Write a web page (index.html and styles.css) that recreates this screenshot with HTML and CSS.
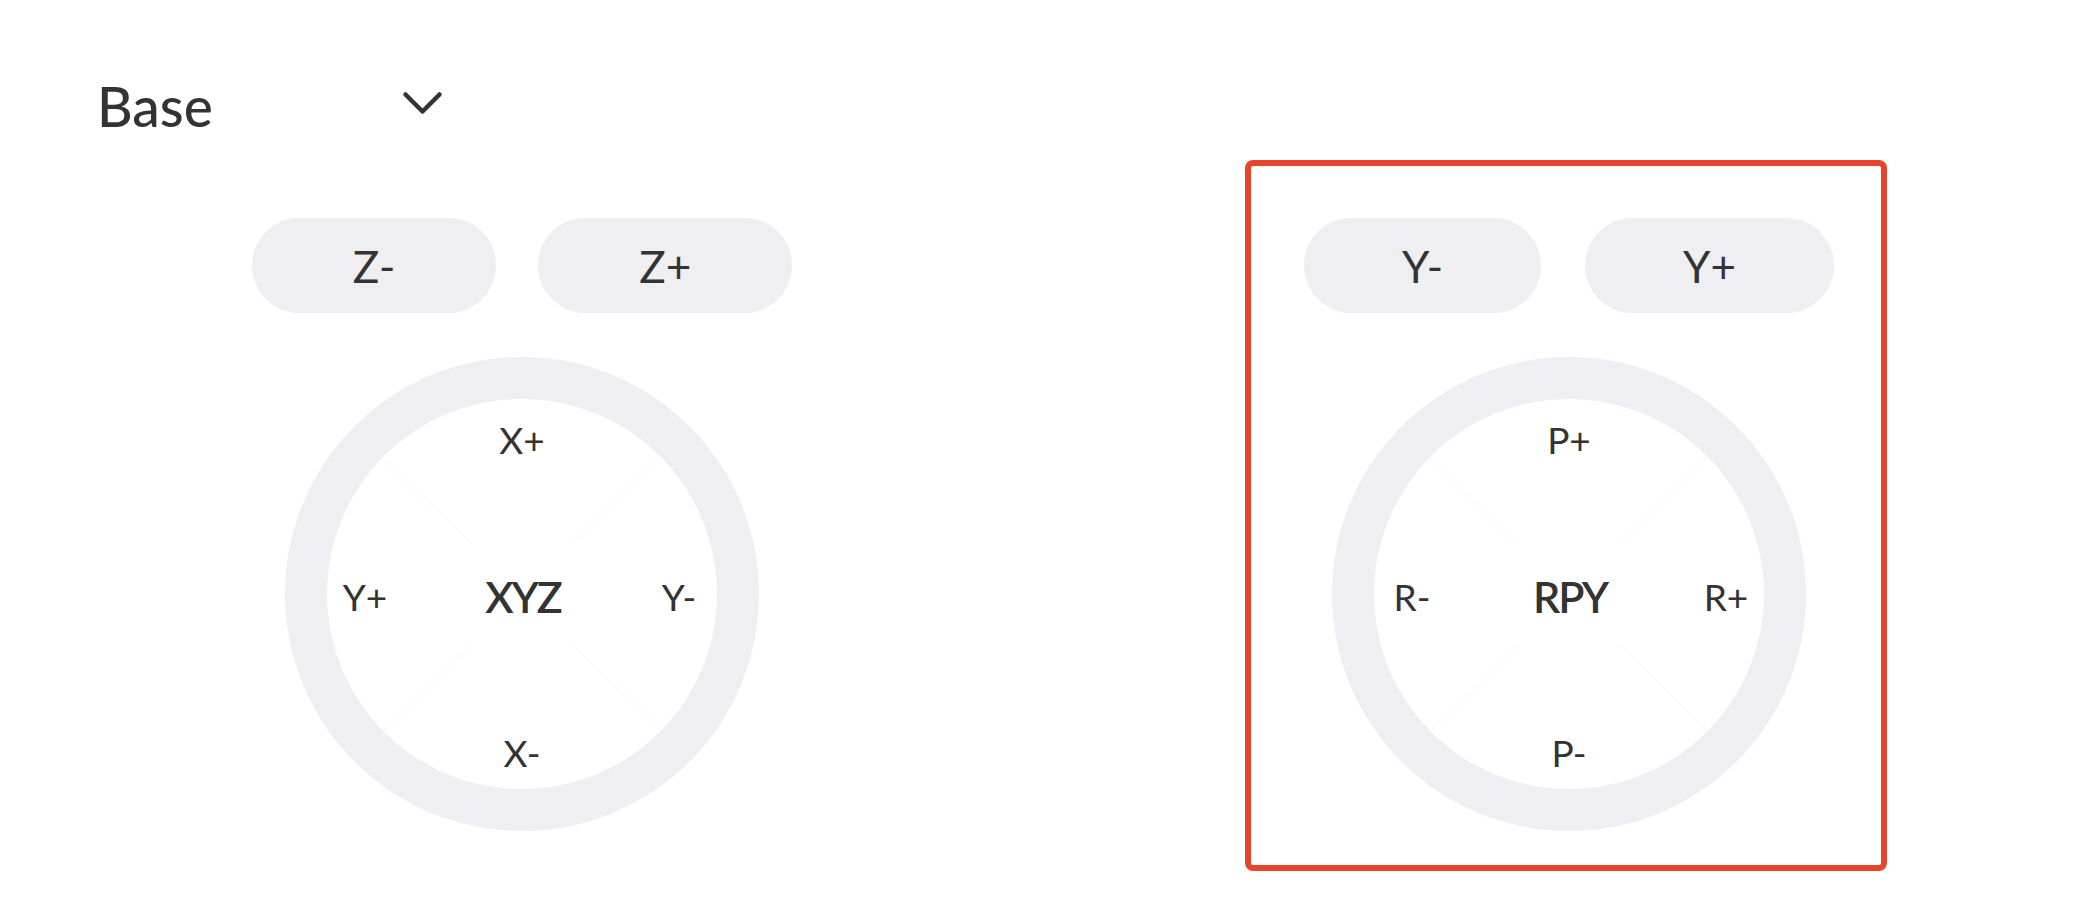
FILE: index.html
```html
<!DOCTYPE html>
<html lang="en">
<head>
<meta charset="utf-8">
<title>Jog</title>
<link rel="stylesheet" href="styles.css">
</head>
<body>
<header class="toolbar">
  <div class="frame-select">
    <span class="frame-select__label">Base</span>
    <svg class="frame-select__chevron" width="41" height="25" viewBox="0 0 41 25"><path d="M3.5 3.5 L20.5 20.5 L37.5 3.5" fill="none" stroke="#333" stroke-width="4.5" stroke-linecap="round" stroke-linejoin="round"/></svg>
  </div>
</header>
<main class="jog">
  <section class="panel">
    <div class="pill-row">
      <button class="pill">Z-</button>
      <button class="pill">Z+</button>
    </div>
    <div class="dial">
      <div class="dial__face">
        <svg class="dial__dividers" width="390" height="390" viewBox="0 0 390 390">
          <line x1="56" y1="58" x2="145" y2="145"/>
          <line x1="334" y1="58" x2="245" y2="145"/>
          <line x1="56" y1="332" x2="145" y2="245"/>
          <line x1="334" y1="332" x2="245" y2="245"/>
        </svg>
        <span class="dial__label dial__label--top">X+</span>
        <span class="dial__label dial__label--left">Y+</span>
        <span class="dial__label dial__label--center">XYZ</span>
        <span class="dial__label dial__label--right">Y-</span>
        <span class="dial__label dial__label--bottom">X-</span>
      </div>
    </div>
  </section>
  <section class="panel panel--selected">
    <div class="pill-row">
      <button class="pill">Y-</button>
      <button class="pill">Y+</button>
    </div>
    <div class="dial">
      <div class="dial__face">
        <svg class="dial__dividers" width="390" height="390" viewBox="0 0 390 390">
          <line x1="56" y1="58" x2="145" y2="145"/>
          <line x1="334" y1="58" x2="245" y2="145"/>
          <line x1="56" y1="332" x2="145" y2="245"/>
          <line x1="334" y1="332" x2="245" y2="245"/>
        </svg>
        <span class="dial__label dial__label--top">P+</span>
        <span class="dial__label dial__label--left">R-</span>
        <span class="dial__label dial__label--center">RPY</span>
        <span class="dial__label dial__label--right">R+</span>
        <span class="dial__label dial__label--bottom">P-</span>
      </div>
    </div>
  </section>
</main>
</body>
</html>
```

FILE: styles.css
```css
* {
  box-sizing: border-box;
}

html, body {
  margin: 0;
  padding: 0;
  background: #ffffff;
}

body {
  font-family: Lato, "Noto Sans", sans-serif;
  color: #333333;
  width: 2096px;
  height: 898px;
  overflow: hidden;
}

.toolbar {
  padding: 79px 0 0 97px;
}

.frame-select {
  display: flex;
  justify-content: space-between;
  align-items: flex-start;
  width: 346px;
}

.frame-select__label {
  font-size: 55px;
  line-height: 55px;
  font-weight: 500;
}

.frame-select__chevron {
  margin-top: 12px;
  display: block;
}

.jog {
  display: grid;
  grid-template-columns: 1fr 1fr;
  padding-right: 8px;
  margin-top: 26px;
  justify-items: center;
}

.panel {
  width: 642px;
  height: 711px;
  border: 6px solid transparent;
  border-radius: 8px;
  padding: 52px 0 34px 0;
  display: flex;
  flex-direction: column;
  align-items: center;
  gap: 44px;
}

.panel--selected {
  border-color: #e8432b;
  padding-left: 6px;
}

.pill-row {
  display: flex;
  gap: 42px;
}

.pill {
  appearance: none;
  border: none;
  margin: 0;
  height: 95px;
  padding: 0 101px;
  border-radius: 48px;
  background: #eeeef3;
  color: #333333;
  font-family: inherit;
  font-size: 44px;
  font-weight: 400;
  display: flex;
  align-items: center;
  justify-content: center;
}

.panel--selected .pill-row {
  gap: 44px;
}

.panel--selected .pill {
  padding: 0 98px;
}

.dial {
  width: 474px;
  height: 474px;
  border-radius: 50%;
  background: #eeeef3;
  padding: 42px;
  flex: none;
}

.dial__face {
  position: relative;
  width: 390px;
  height: 390px;
  border-radius: 50%;
  background: #ffffff;
  display: grid;
  grid-template-columns: 76px 1fr 76px;
  grid-template-rows: 72px 1fr 72px;
  grid-template-areas:
    ". top ."
    "left center right"
    ". bottom .";
  padding-top: 6px;
}

.dial__dividers {
  position: absolute;
  left: 0;
  top: 0;
  stroke: #f4f4f4;
  stroke-width: 1;
}

.dial__label {
  position: relative;
  place-self: center;
  font-size: 37px;
  line-height: 1.2;
  white-space: nowrap;
}

.dial__label--top { grid-area: top; margin-top: -2px; }
.dial__label--left { grid-area: left; }
.dial__label--right { grid-area: right; }
.dial__label--bottom { grid-area: bottom; }

.dial__label--center {
  grid-area: center;
  font-size: 43px;
  font-weight: 600;
  letter-spacing: -2px;
  margin-right: -2px;
}
```
